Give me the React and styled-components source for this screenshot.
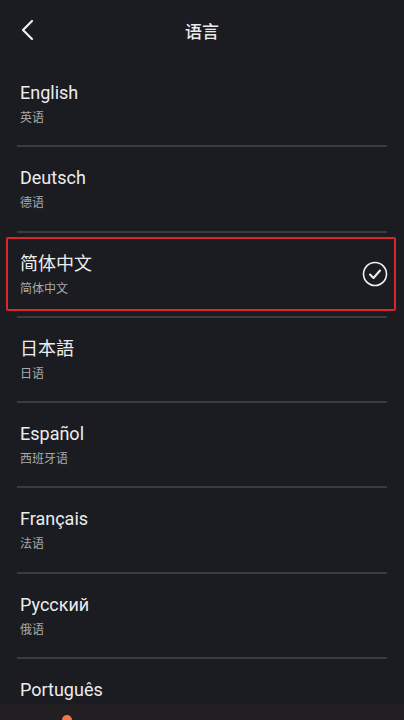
import React from "react";
import styled, { createGlobalStyle } from "styled-components";

const Global = createGlobalStyle`
  html, body { margin: 0; padding: 0; background: #1b1c21; }
  body { font-family: Roboto, "Noto Sans CJK SC", sans-serif; }
`;

const Page = styled.div`
  width: 404px;
  height: 720px;
  background: #1b1c21;
  display: flex;
  flex-direction: column;
  overflow: hidden;
`;

const Header = styled.header`
  height: 62px;
  flex: none;
  display: grid;
  grid-template-columns: 60px 1fr 60px;
  align-items: start;
  padding-top: 19px;
  box-sizing: border-box;
`;

const BackBtn = styled.div`
  display: flex;
  align-items: center;
  padding-left: 20px;
`;

const Title = styled.h1`
  margin: 0;
  text-align: center;
  color: #ececec;
  font-size: 17px;
  line-height: 24px;
  font-weight: 500;
  font-family: "Noto Sans CJK SC", sans-serif;
`;

const List = styled.div`
  flex: 1;
  display: flex;
  flex-direction: column;
  overflow: hidden;
`;

const Item = styled.div`
  height: 83.3px;
  flex: none;
  box-sizing: border-box;
  padding: 4px 8px 5px 6px;
  display: flex;
`;

const Box = styled.div`
  flex: 1;
  box-sizing: border-box;
  border: 2px solid ${(p) => (p.$selected ? "#d8262a" : "transparent")};
  border-radius: 2px;
  padding: 14px 6px 0 12px;
  display: flex;
  align-items: flex-start;
  justify-content: space-between;
`;

const Texts = styled.div`
  display: flex;
  flex-direction: column;
  gap: 5px;
`;

const Name = styled.div`
  color: #ededed;
  font-size: 18px;
  line-height: 22px;
  font-family: Roboto, "Noto Sans CJK SC", sans-serif;
`;

const Sub = styled.div`
  color: #a9aaad;
  font-size: 12px;
  line-height: 16px;
  font-family: "Noto Sans CJK SC", sans-serif;
`;

const Check = styled.div`
  align-self: center;
  margin-top: -14px;
  display: flex;
`;

const Divider = styled.div`
  height: 2px;
  flex: none;
  margin: 0 17px;
  background: #3a3b40;
`;

const BottomBar = styled.div`
  height: 16px;
  flex: none;
  background: #211f21;
  position: relative;
`;

const Dot = styled.span`
  position: absolute;
  left: 62px;
  top: 11px;
  width: 10px;
  height: 10px;
  border-radius: 50%;
  background: #f07a45;
`;

const langs = [
  ["English", "英语"],
  ["Deutsch", "德语"],
  ["简体中文", "简体中文", true],
  ["日本語", "日语"],
  ["Español", "西班牙语"],
  ["Français", "法语"],
  ["Русский", "俄语"],
  ["Português", null],
];

export default function App() {
  return (
    <Page>
      <Global />
      <Header>
        <BackBtn>
          <svg width="16" height="22" viewBox="0 0 16 22" fill="none">
            <path d="M12 2 L3 11 L12 20" stroke="#f0f0f0" strokeWidth="2.2" strokeLinecap="round" strokeLinejoin="round" />
          </svg>
        </BackBtn>
        <Title>语言</Title>
        <div />
      </Header>
      <List>
        {langs.map(([n, s, sel], i) => (
          <React.Fragment key={n}>
            <Item>
              <Box $selected={sel}>
                <Texts>
                  <Name>{n}</Name>
                  {s && <Sub>{s}</Sub>}
                </Texts>
                {sel && (
                  <Check>
                    <svg width="26" height="26" viewBox="0 0 26 26" fill="none">
                      <circle cx="13" cy="13" r="11.5" stroke="#f2f2f2" strokeWidth="1.6" />
                      <path d="M8 13.5 L11.5 17 L18 9.5" stroke="#f2f2f2" strokeWidth="2" strokeLinecap="round" strokeLinejoin="round" />
                    </svg>
                  </Check>
                )}
              </Box>
            </Item>
            {i < langs.length - 1 && <Divider />}
          </React.Fragment>
        ))}
      </List>
      <BottomBar>
        <Dot />
      </BottomBar>
    </Page>
  );
}
